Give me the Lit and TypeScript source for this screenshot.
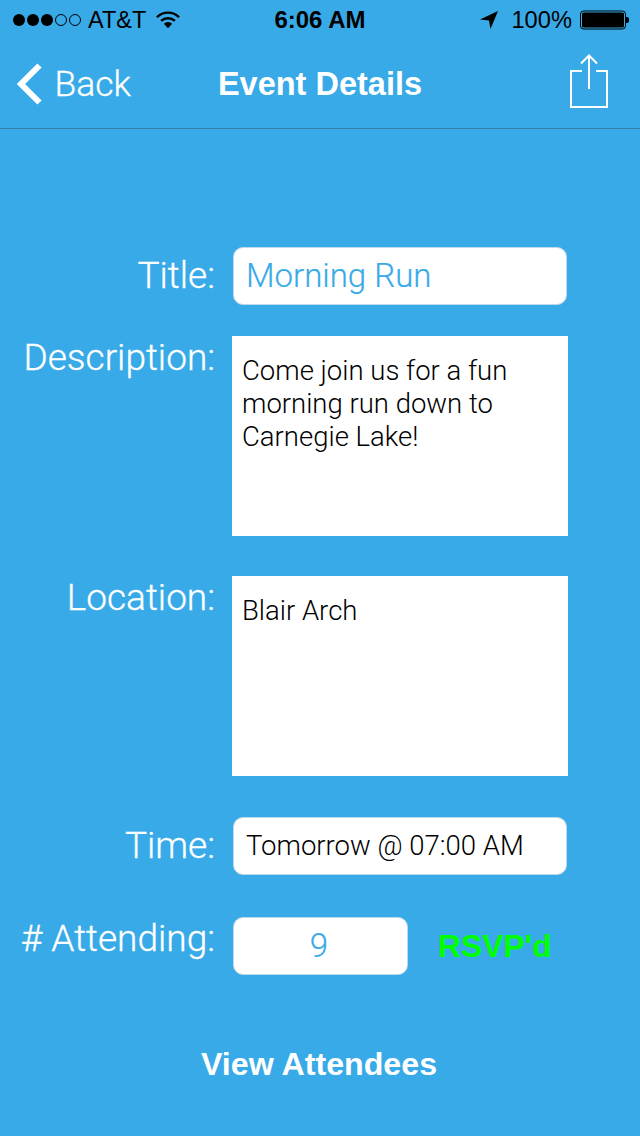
import { LitElement, html, css } from 'lit'
import { customElement } from 'lit/decorators.js'

@customElement('app-root')
export class AppRoot extends LitElement {
  static styles = css`
    :host {
      display: block;
      width: 640px;
      height: 1136px;
      overflow: hidden;
      background: #38aae8;
      color: #fff;
      font-family: 'Liberation Sans', Arial, sans-serif;
    }
    .status {
      height: 40px;
      display: grid;
      grid-template-columns: 1fr auto 1fr;
      align-items: center;
      color: #000;
      font-size: 24px;
    }
    .status-left {
      display: flex;
      align-items: center;
      padding-left: 13px;
    }
    .status-left .carrier {
      margin-left: 7px;
      font-size: 23.5px;
    }
    .status-left .wifi {
      margin-left: 10px;
    }
    .dots {
      display: flex;
      gap: 2px;
    }
    .dot {
      width: 12px;
      height: 12px;
      border-radius: 50%;
      background: #000;
      box-sizing: border-box;
    }
    .dot.off {
      background: none;
      border: 1px solid #000;
    }
    .clock {
      font-weight: 700;
      font-size: 24px;
    }
    .status-right {
      display: flex;
      align-items: center;
      justify-content: flex-end;
      padding-right: 11px;
    }
    .status-right .pct {
      margin-left: 13px;
      margin-right: 8px;
      font-size: 23.7px;
    }
    .nav {
      height: 89px;
      box-sizing: border-box;
      border-bottom: 1px solid #3a7fa8;
      display: grid;
      grid-template-columns: 1fr auto 1fr;
      align-items: center;
    }
    .back {
      display: flex;
      align-items: center;
      padding-left: 16px;
      font-family: Roboto, 'Liberation Sans', sans-serif;
      font-weight: 300;
      font-size: 35.5px;
      gap: 12.5px;
      -webkit-text-stroke: 0.3px #fff;
    }
    .nav-title {
      font-size: 32.5px;
      font-weight: 700;
    }
    .share {
      display: flex;
      justify-content: flex-end;
      padding-right: 32px;
      padding-bottom: 6px;
    }
    .form {
      display: grid;
      grid-template-columns: 215px 336px;
      column-gap: 17px;
      padding-top: 118px;
      font-family: Roboto, 'Liberation Sans', sans-serif;
      font-weight: 300;
    }
    .label {
      font-size: 37px;
      text-align: right;
      line-height: 44px;
      white-space: nowrap;
      -webkit-text-stroke: 0.3px #fff;
    }
    .input {
      height: 58px;
      margin: 0 1px;
      box-sizing: border-box;
      background: #fff;
      border: 1px solid #bcd8ea;
      border-radius: 10px;
      display: flex;
      align-items: center;
      padding: 0 0 2px 12px;
      font-size: 33px;
      color: #38aae8;
      -webkit-text-stroke: 0.2px currentColor;
    }
    .label.single {
      line-height: 58px;
    }
    .area {
      height: 200px;
      background: #fff;
      color: #000;
      font-size: 27.5px;
      line-height: 33px;
      padding: 18px 10px 0;
      box-sizing: border-box;
    }
    .time {
      color: #000;
      font-size: 27.5px;
      -webkit-text-stroke: 0;
    }
    .r-title {
      margin-bottom: 31px;
    }
    .r-desc {
      margin-bottom: 40px;
    }
    .r-loc {
      margin-bottom: 41px;
    }
    .r-time {
      margin-bottom: 42px;
    }
    .attending {
      display: flex;
      align-items: center;
      gap: 30px;
    }
    .count {
      width: 175px;
      margin: 0 0 0 1px;
      padding: 0 3px 2px 0;
      justify-content: center;
    }
    .rsvp {
      color: #00ff00;
      font-family: 'Liberation Sans', sans-serif;
      font-size: 31.8px;
      font-weight: 700;
      -webkit-text-stroke: 0;
    }
    .view {
      text-align: center;
      font-size: 32.2px;
      font-weight: 700;
      margin-top: 71px;
      padding-right: 2px;
    }
  `

  render() {
    return html`
      <div class="status">
        <div class="status-left">
          <div class="dots">
            <span class="dot"></span><span class="dot"></span><span class="dot"></span>
            <span class="dot off"></span><span class="dot off"></span>
          </div>
          <span class="carrier">AT&amp;T</span>
          <svg class="wifi" width="24" height="18" viewBox="0 0 26 19">
            <path d="M1 6.5a17 17 0 0 1 24 0" fill="none" stroke="#000" stroke-width="2.6" />
            <path d="M5.5 10.5a11 11 0 0 1 15 0" fill="none" stroke="#000" stroke-width="2.6" />
            <path d="M8.5 13.5a6.5 6.5 0 0 1 9 0L13 18.5z" fill="#000" />
          </svg>
        </div>
        <div class="clock">6:06 AM</div>
        <div class="status-right">
          <svg width="18" height="18" viewBox="0 0 18 18">
            <path d="M18 0 L0 8.5 L9 9.5 L10.5 18z" fill="#000" />
          </svg>
          <span class="pct">100%</span>
          <svg width="49" height="20" viewBox="0 0 49 20">
            <rect x="0.5" y="1" width="45" height="18" rx="3" fill="none" stroke="#000" />
            <rect x="2" y="2.5" width="42" height="15" rx="1.5" fill="#000" />
            <path d="M46 7h1a2 2 0 0 1 2 2v2a2 2 0 0 1-2 2h-1z" fill="#000" />
          </svg>
        </div>
      </div>
      <div class="nav">
        <div class="back">
          <svg width="26" height="42" viewBox="0 0 26 42">
            <path d="M23.5 2.5 L5 21 L23.5 39.5" fill="none" stroke="#fff" stroke-width="6" />
          </svg>
          <span>Back</span>
        </div>
        <div class="nav-title">Event Details</div>
        <div class="share">
          <svg width="38" height="54" viewBox="0 0 38 54">
            <path d="M12 17H1V53H37V17H26" fill="none" stroke="#fff" stroke-width="2" />
            <path d="M19 2V35" fill="none" stroke="#fff" stroke-width="2" />
            <path d="M11 9.5L19 1.5L27 9.5" fill="none" stroke="#fff" stroke-width="2" />
          </svg>
        </div>
      </div>
      <div class="form">
        <div class="label single">Title:</div>
        <div class="input r-title">Morning Run</div>
        <div class="label">Description:</div>
        <div class="area r-desc">Come join us for a fun<br />morning run down to<br />Carnegie Lake!</div>
        <div class="label">Location:</div>
        <div class="area r-loc">Blair Arch</div>
        <div class="label single">Time:</div>
        <div class="input time r-time">Tomorrow @ 07:00 AM</div>
        <div class="label"># Attending:</div>
        <div class="attending">
          <div class="input count">9</div>
          <span class="rsvp">RSVP'd</span>
        </div>
      </div>
      <div class="view">View Attendees</div>
    `
  }
}
